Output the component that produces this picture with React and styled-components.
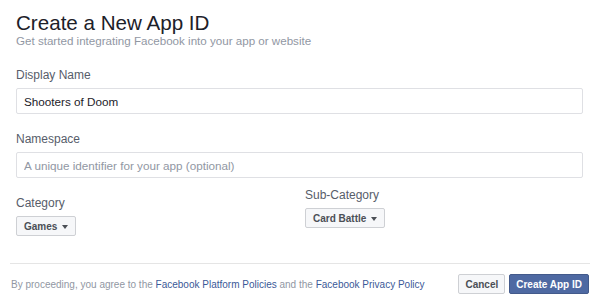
import React from "react";
import styled, { createGlobalStyle } from "styled-components";

const GlobalStyle = createGlobalStyle`
  html, body {
    margin: 0;
    padding: 0;
    background: #ffffff;
    font-family: "Liberation Sans", Arial, Helvetica, sans-serif;
  }
`;

const Dialog = styled.div`
  width: 600px;
  height: 304px;
  background: #fff;
  box-sizing: border-box;
  display: flex;
  flex-direction: column;
  overflow: hidden;
`;

const Header = styled.div`
  padding: 12px 17px 0 16px;
`;

const Title = styled.h1`
  margin: 0;
  font-size: 20.6px;
  line-height: 22px;
  font-weight: normal;
  color: #1d2129;
`;

const Subtitle = styled.div`
  font-size: 11.6px;
  line-height: 14px;
  color: #9197a3;
`;

const Body = styled.div`
  padding: 20px 17px 0 16px;
  display: flex;
  flex-direction: column;
  gap: 18px;
`;

const Field = styled.div`
  display: flex;
  flex-direction: column;
  gap: 6px;
`;

const Label = styled.label`
  font-size: 12px;
  line-height: 14px;
  color: #575d6a;
`;

const Input = styled.input`
  box-sizing: border-box;
  height: 26px;
  width: 100%;
  margin: 0;
  padding: 0 7px;
  border: 1px solid #dfe0e4;
  border-radius: 2px;
  font-family: inherit;
  font-size: 11.7px;
  color: #1d2129;
  outline: none;

  &::placeholder {
    color: #9197a3;
  }
`;

const Columns = styled.div`
  display: grid;
  grid-template-columns: 289px 1fr;
  margin-top: -8px;
`;

const Column = styled(Field)`
  align-items: flex-start;
  padding-top: ${(p) => p.$offset || 0}px;
`;

const Select = styled.button`
  box-sizing: border-box;
  height: 20px;
  padding: 0 7px;
  display: inline-flex;
  align-items: center;
  gap: 5px;
  background: #f6f7f9;
  border: 1px solid #ced0d4;
  border-radius: 2px;
  font-family: inherit;
  font-size: 10px;
  font-weight: bold;
  color: #4b4f56;
  cursor: pointer;
`;

const Caret = styled.span`
  width: 0;
  height: 0;
  border-left: 3.5px solid transparent;
  border-right: 3.5px solid transparent;
  border-top: 4px solid #4b4f56;
  margin-top: 1px;
`;

const Footer = styled.div`
  margin: auto 10px 0;
  padding: 10px 1px;
  border-top: 1px solid #e5e5e5;
  display: flex;
  align-items: center;
  justify-content: space-between;
`;

const Terms = styled.div`
  font-size: 10px;
  color: #9197a3;
`;

const Link = styled.a`
  color: #3b5998;
  text-decoration: none;
`;

const Actions = styled.div`
  display: flex;
  gap: 4px;
`;

const Button = styled.button`
  box-sizing: border-box;
  height: 20px;
  padding: 0 6px;
  border-radius: 2px;
  font-family: inherit;
  font-size: 10px;
  font-weight: bold;
  cursor: pointer;
  background: ${(p) => (p.$primary ? "#4e69a2" : "#f6f7f9")};
  border: 1px solid ${(p) => (p.$primary ? "#435a8b" : "#ced0d4")};
  color: ${(p) => (p.$primary ? "#ffffff" : "#4b4f56")};
`;

export default function App() {
  return (
    <>
      <GlobalStyle />
      <Dialog>
        <Header>
          <Title>Create a New App ID</Title>
          <Subtitle>Get started integrating Facebook into your app or website</Subtitle>
        </Header>

        <Body>
          <Field>
            <Label>Display Name</Label>
            <Input defaultValue="Shooters of Doom" />
          </Field>
          <Field>
            <Label>Namespace</Label>
            <Input placeholder="A unique identifier for your app (optional)" />
          </Field>
          <Columns>
            <Column $offset={8}>
              <Label>Category</Label>
              <Select>
                Games <Caret />
              </Select>
            </Column>
            <Column>
              <Label>Sub-Category</Label>
              <Select>
                Card Battle <Caret />
              </Select>
            </Column>
          </Columns>
        </Body>

        <Footer>
          <Terms>
            By proceeding, you agree to the <Link href="#">Facebook Platform Policies</Link> and the{" "}
            <Link href="#">Facebook Privacy Policy</Link>
          </Terms>
          <Actions>
            <Button>Cancel</Button>
            <Button $primary>Create App ID</Button>
          </Actions>
        </Footer>
      </Dialog>
    </>
  );
}
